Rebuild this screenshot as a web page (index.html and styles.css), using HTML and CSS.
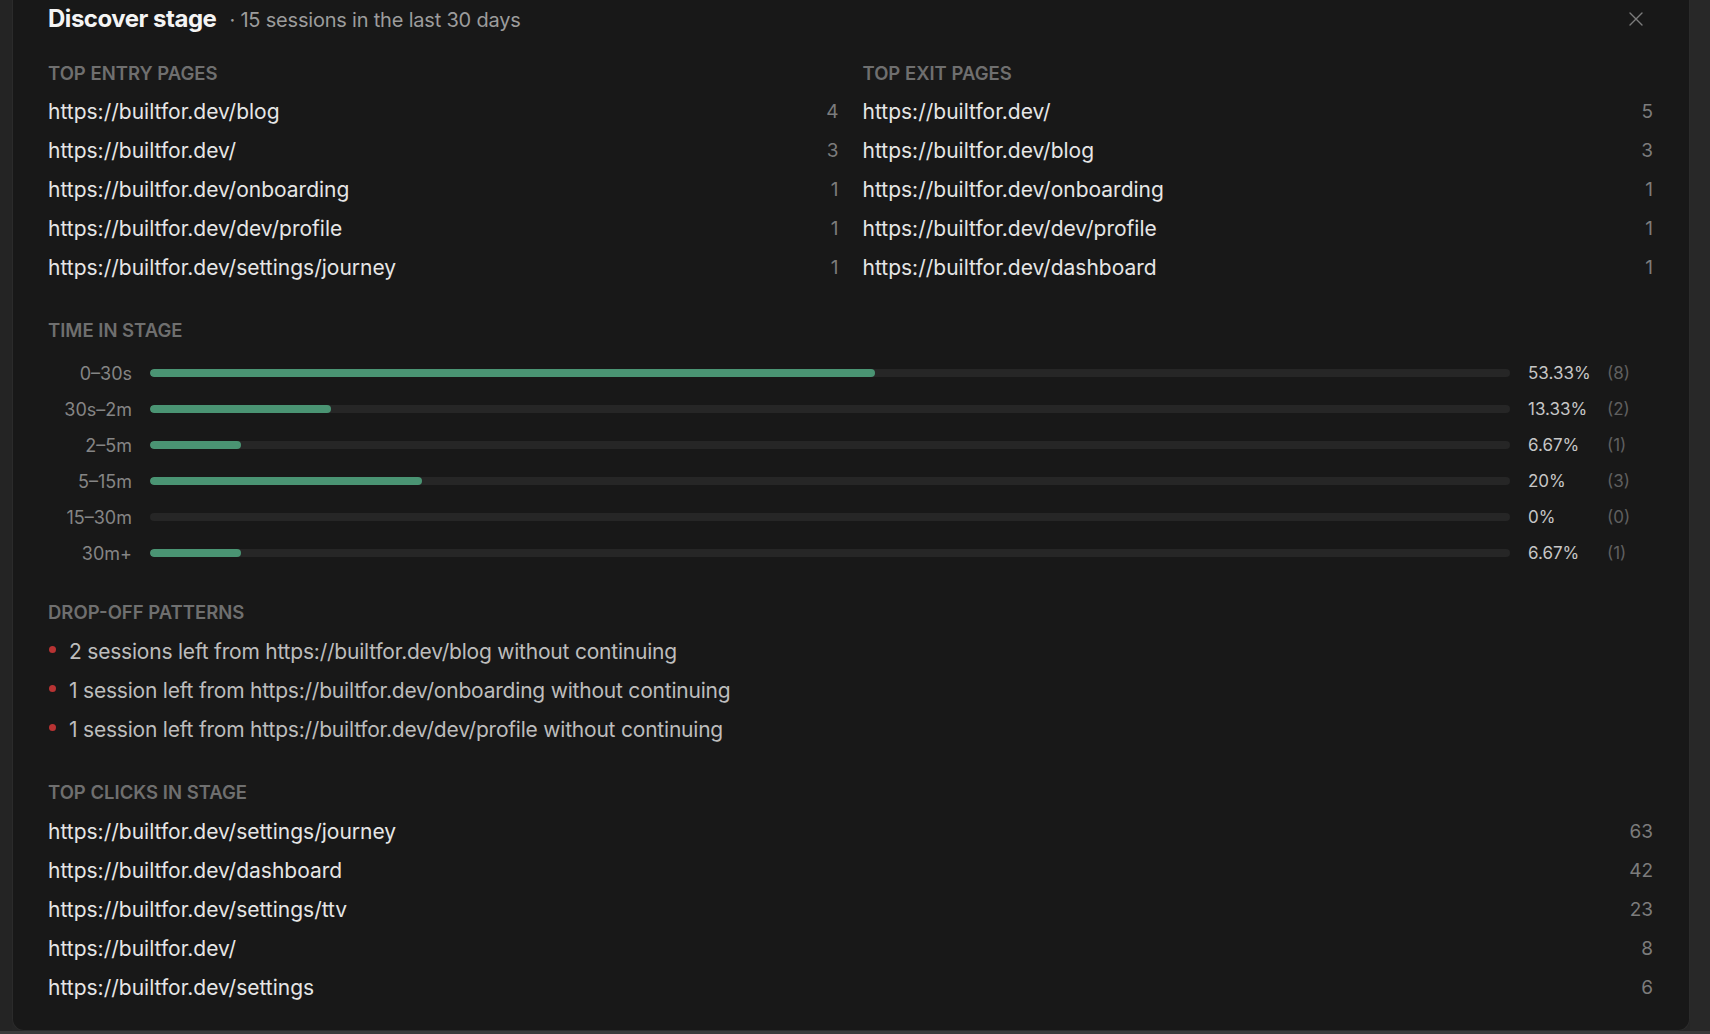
FILE: index.html
```html
<!DOCTYPE html>
<html lang="en">
<head>
<meta charset="utf-8">
<title>Discover stage</title>
<link rel="stylesheet" href="styles.css">
</head>
<body>
<div class="page">
  <div class="stage">
    <div class="gutter-left"></div>
    <section class="panel">
      <header class="panel-head">
        <div class="title-wrap">
          <h1 class="title">Discover stage</h1>
          <span class="subtitle">· 15 sessions in the last 30 days</span>
        </div>
        <button class="close" aria-label="Close">
          <svg width="14" height="14" viewBox="0 0 14 14"><path d="M1 1 L13 13 M13 1 L1 13" stroke="#7c7c7c" stroke-width="1.4" stroke-linecap="round" fill="none"/></svg>
        </button>
      </header>

      <div class="two-col">
        <div class="col">
          <h2 class="sec-title">Top entry pages</h2>
          <ul class="list">
            <li class="row"><span class="url">https://builtfor.dev/blog</span><span class="num">4</span></li>
            <li class="row"><span class="url">https://builtfor.dev/</span><span class="num">3</span></li>
            <li class="row"><span class="url">https://builtfor.dev/onboarding</span><span class="num">1</span></li>
            <li class="row"><span class="url">https://builtfor.dev/dev/profile</span><span class="num">1</span></li>
            <li class="row"><span class="url">https://builtfor.dev/settings/journey</span><span class="num">1</span></li>
          </ul>
        </div>
        <div class="col">
          <h2 class="sec-title">Top exit pages</h2>
          <ul class="list">
            <li class="row"><span class="url">https://builtfor.dev/</span><span class="num">5</span></li>
            <li class="row"><span class="url">https://builtfor.dev/blog</span><span class="num">3</span></li>
            <li class="row"><span class="url">https://builtfor.dev/onboarding</span><span class="num">1</span></li>
            <li class="row"><span class="url">https://builtfor.dev/dev/profile</span><span class="num">1</span></li>
            <li class="row"><span class="url">https://builtfor.dev/dashboard</span><span class="num">1</span></li>
          </ul>
        </div>
      </div>

      <div class="section time-section">
        <h2 class="sec-title">Time in stage</h2>
        <div class="bars">
          <div class="bar-row"><span class="bar-label">0–30s</span><div class="track"><div class="fill" style="width:53.33%"></div></div><span class="pct">53.33%</span><span class="cnt">(8)</span></div>
          <div class="bar-row"><span class="bar-label">30s–2m</span><div class="track"><div class="fill" style="width:13.33%"></div></div><span class="pct">13.33%</span><span class="cnt">(2)</span></div>
          <div class="bar-row"><span class="bar-label">2–5m</span><div class="track"><div class="fill" style="width:6.67%"></div></div><span class="pct">6.67%</span><span class="cnt">(1)</span></div>
          <div class="bar-row"><span class="bar-label">5–15m</span><div class="track"><div class="fill" style="width:20%"></div></div><span class="pct">20%</span><span class="cnt">(3)</span></div>
          <div class="bar-row"><span class="bar-label">15–30m</span><div class="track"><div class="fill" style="width:0%"></div></div><span class="pct">0%</span><span class="cnt">(0)</span></div>
          <div class="bar-row"><span class="bar-label">30m+</span><div class="track"><div class="fill" style="width:6.67%"></div></div><span class="pct">6.67%</span><span class="cnt">(1)</span></div>
        </div>
      </div>

      <div class="section drop-section">
        <h2 class="sec-title">Drop-off patterns</h2>
        <ul class="list drop-list">
          <li class="drop"><span class="dot"></span><span class="drop-text">2 sessions left from https://builtfor.dev/blog without continuing</span></li>
          <li class="drop"><span class="dot"></span><span class="drop-text">1 session left from https://builtfor.dev/onboarding without continuing</span></li>
          <li class="drop"><span class="dot"></span><span class="drop-text">1 session left from https://builtfor.dev/dev/profile without continuing</span></li>
        </ul>
      </div>

      <div class="section clicks-section">
        <h2 class="sec-title">Top clicks in stage</h2>
        <ul class="list clicks-list">
          <li class="row"><span class="url">https://builtfor.dev/settings/journey</span><span class="num">63</span></li>
          <li class="row"><span class="url">https://builtfor.dev/dashboard</span><span class="num">42</span></li>
          <li class="row"><span class="url">https://builtfor.dev/settings/ttv</span><span class="num">23</span></li>
          <li class="row"><span class="url">https://builtfor.dev/</span><span class="num">8</span></li>
          <li class="row"><span class="url">https://builtfor.dev/settings</span><span class="num">6</span></li>
        </ul>
      </div>
    </section>
    <div class="gutter-right"></div>
  </div>
  <div class="bottom-strip"></div>
</div>
</body>
</html>
```

FILE: styles.css
```css
* { box-sizing: border-box; }

html, body {
  margin: 0;
  padding: 0;
  background: #252525;
  font-family: Inter, "Noto Sans", "Liberation Sans", sans-serif;
  color: #e8e8e8;
}

.page {
  width: 1710px;
  height: 1034px;
  display: flex;
  flex-direction: column;
  overflow: hidden;
}

.stage {
  display: flex;
  height: 1031px;
}

.gutter-left {
  width: 12px;
  background: #242424;
}

.gutter-right {
  flex: 1;
  background: #282828;
}

.panel {
  width: 1678px;
  height: 1031px;
  background: #181818;
  border: 1px solid #2b2b2b;
  border-top: none;
  border-radius: 0 0 12px 12px;
  padding: 0 36px 24px 35px;
}

.bottom-strip {
  height: 3px;
  background: #3a3a3a;
}

.panel-head {
  height: 37px;
  display: flex;
  align-items: center;
  justify-content: space-between;
}

.title-wrap {
  display: flex;
  align-items: baseline;
  gap: 13px;
}

.title {
  margin: 0;
  font-size: 24px;
  font-weight: 700;
  letter-spacing: -0.02em;
  color: #f4f4f4;
}

.subtitle {
  font-size: 20px;
  color: #9c9c9c;
  letter-spacing: -0.01em;
}

.close {
  width: 34px;
  height: 34px;
  border: none;
  background: transparent;
  padding: 0;
  display: flex;
  align-items: center;
  justify-content: center;
}

.two-col {
  margin-top: 25px;
  display: grid;
  grid-template-columns: 1fr 1fr;
  column-gap: 24px;
}

.sec-title {
  margin: 0 0 8px;
  height: 22px;
  line-height: 22px;
  font-size: 18.5px;
  font-weight: 600;
  text-transform: uppercase;
  color: #6f6f6f;
}

.list {
  list-style: none;
  margin: 0;
  padding: 0;
}

.row {
  height: 39px;
  display: flex;
  align-items: center;
  justify-content: space-between;
}

.url {
  font-size: 21px;
  color: #e6e6e6;
}

.num {
  font-size: 19px;
  color: #7c7c7c;
}

.section {
  margin-top: 32px;
}

.drop-section {
  margin-top: 30px;
}

.clicks-section {
  margin-top: 32px;
}

.clicks-list {
  padding-top: 1px;
}

.bars {
  padding-top: 6px;
}

.bar-row {
  height: 36px;
  display: flex;
  align-items: center;
}

.bar-label {
  width: 84px;
  text-align: right;
  font-size: 18px;
  color: #858585;
}

.track {
  flex: 1;
  height: 8px;
  margin: 0 18px;
  border-radius: 4px;
  background: #262626;
  overflow: hidden;
}

.fill {
  height: 100%;
  border-radius: 4px;
  background: #4a9473;
}

.pct {
  width: 79px;
  font-size: 17px;
  color: #c6c6c6;
}

.cnt {
  width: 46px;
  font-size: 17px;
  color: #5f5f5f;
}

.drop-list {
  padding-top: 1px;
}

.drop {
  height: 39px;
  display: flex;
  align-items: center;
}

.dot {
  width: 7px;
  height: 7px;
  margin: 0 13px 4px 1px;
  border-radius: 50%;
  background: #b83333;
  flex: none;
}

.drop-text {
  font-size: 21px;
  color: #bdbdbd;
  letter-spacing: -0.01em;
}
```
